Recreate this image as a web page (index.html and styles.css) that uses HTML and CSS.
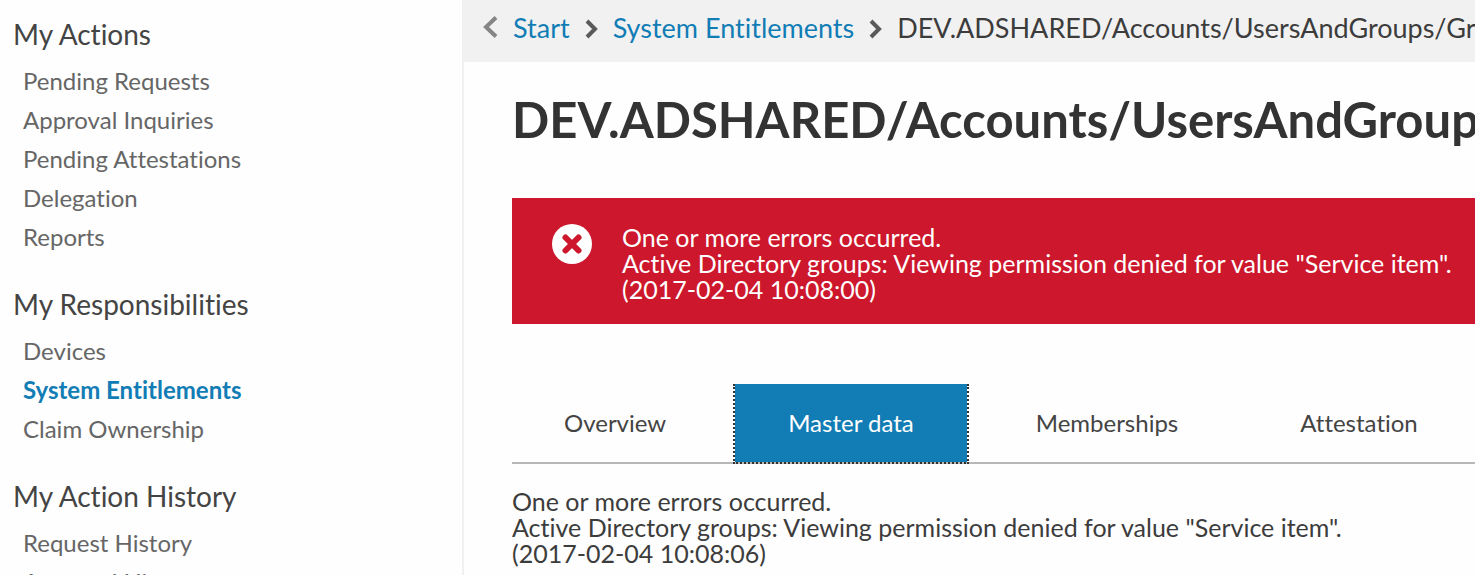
FILE: index.html
```html
<!DOCTYPE html>
<html lang="en">
<head>
<meta charset="utf-8">
<meta name="viewport" content="width=device-width, initial-scale=1">
<title>System Entitlements</title>
<link rel="stylesheet" href="styles.css">
</head>
<body>
<div class="layout">
  <nav class="sidebar" aria-label="Main">
    <section class="menu">
      <h2 class="menu-title">My Actions</h2>
      <ul class="menu-list">
        <li><a href="#">Pending Requests</a></li>
        <li><a href="#">Approval Inquiries</a></li>
        <li><a href="#">Pending Attestations</a></li>
        <li><a href="#">Delegation</a></li>
        <li><a href="#">Reports</a></li>
      </ul>
    </section>
    <section class="menu">
      <h2 class="menu-title">My Responsibilities</h2>
      <ul class="menu-list">
        <li><a href="#">Devices</a></li>
        <li><a href="#" class="current" aria-current="page">System Entitlements</a></li>
        <li><a href="#">Claim Ownership</a></li>
      </ul>
    </section>
    <section class="menu">
      <h2 class="menu-title">My Action History</h2>
      <ul class="menu-list">
        <li><a href="#">Request History</a></li>
        <li><a href="#">Approval History</a></li>
      </ul>
    </section>
  </nav>
  <main class="main">
    <nav class="breadcrumb" aria-label="Breadcrumb">
      <a href="#" class="back" aria-label="Back">
        <svg width="16" height="22" viewBox="0 0 16 22"><path d="M14 1.500L4 11l10 9.500" fill="none" stroke="#858585" stroke-width="4"/></svg>
      </a>
      <a href="#">Start</a>
      <svg class="separator" width="14" height="20" viewBox="0 0 14 20"><path d="M2 2l8 8-8 8" fill="none" stroke="#5a5a5a" stroke-width="4"/></svg>
      <a href="#">System Entitlements</a>
      <svg class="separator" width="14" height="20" viewBox="0 0 14 20"><path d="M2 2l8 8-8 8" fill="none" stroke="#5a5a5a" stroke-width="4"/></svg>
      <span>DEV.ADSHARED/Accounts/UsersAndGroups/Groups</span>
    </nav>
    <div class="content">
      <h1 class="title">DEV.ADSHARED/Accounts/UsersAndGroups/Groups</h1>
      <div class="alert" role="alert">
        <svg class="alert-icon" width="40" height="40" viewBox="0 0 40 40"><circle cx="20" cy="20" r="20" fill="#fff"/><path d="M13.500 13.500l13 13M26.500 13.500l-13 13" stroke="#cd172c" stroke-width="6" stroke-linecap="round"/></svg>
        <p class="message">One or more errors occurred.<br>Active Directory groups: Viewing permission denied for value "Service item".<br>(2017-02-04 10:08:00)</p>
      </div>
      <div class="tabs" role="tablist">
        <button class="tab" role="tab" type="button">Overview</button>
        <button class="tab selected" role="tab" type="button" aria-selected="true">Master data</button>
        <button class="tab" role="tab" type="button">Memberships</button>
        <button class="tab" role="tab" type="button">Attestation</button>
      </div>
      <p class="message">One or more errors occurred.<br>Active Directory groups: Viewing permission denied for value "Service item".<br>(2017-02-04 10:08:06)</p>
    </div>
  </main>
</div>
</body>
</html>
```
FILE: styles.css
```css
* {
  box-sizing: border-box;
}

body {
  margin: 0;
  height: 100vh;
  overflow: hidden;
  background: #fefefe;
  color: #3c3c3c;
  font-family: Lato, sans-serif;
  font-size: 25px;
  font-variant-ligatures: none;
}

h1, h2, p, ul {
  margin: 0;
  padding: 0;
}

a {
  color: #127db5;
  text-decoration: none;
}

.layout {
  display: grid;
  grid-template-columns: 462px minmax(0, 1fr);
  min-height: 100vh;
}

.sidebar {
  display: flex;
  flex-direction: column;
  gap: 28px;
  padding: 14px 13px;
}

.menu-title {
  margin-bottom: 7px;
  color: #444;
  font-size: 28px;
  font-weight: 400;
  line-height: 40px;
}

.menu-list {
  padding-left: 10px;
  list-style: none;
  font-size: 24px;
  line-height: 39px;
}

.menu-list a {
  display: block;
  color: #666;
}

.menu-list .current {
  color: #127db5;
  font-weight: 700;
}

.main {
  border-left: 2px solid #f0f0f0;
  overflow: hidden;
}

.breadcrumb {
  display: flex;
  align-items: center;
  height: 62px;
  padding: 0 0 8px 18px;
  background: #f1f1f1;
  font-size: 27px;
  white-space: nowrap;
}

.back {
  display: flex;
  margin-right: 15px;
}

.separator {
  flex: none;
  margin: 4px 14px 0 15px;
}

.content {
  padding-left: 48px;
}

.title {
  margin: 28px 0 50px;
  color: #333;
  font-size: 49px;
  font-weight: 700;
  line-height: 58px;
  white-space: nowrap;
}

.alert {
  display: flex;
  gap: 30px;
  margin-bottom: 60px;
  padding: 26px 0 22px 40px;
  background: #cd172c;
  color: #fff;
}

.alert-icon {
  flex: none;
}

.message {
  line-height: 26px;
  white-space: nowrap;
}

.tabs {
  display: flex;
  gap: 12px;
  height: 80px;
  margin-bottom: 24px;
  box-shadow: inset 0 -2px #b8b8b8;
}

.tab {
  flex: none;
  padding: 0 53px 2px;
  border: 2px solid transparent;
  border-top: 0;
  background: none;
  color: #444;
  font: inherit;
  font-size: 24px;
}

.tab:first-child {
  padding-left: 50px;
}

.selected {
  border-color: #333;
  border-style: dotted;
  background: #127db5 padding-box;
  color: #fff;
}
```
